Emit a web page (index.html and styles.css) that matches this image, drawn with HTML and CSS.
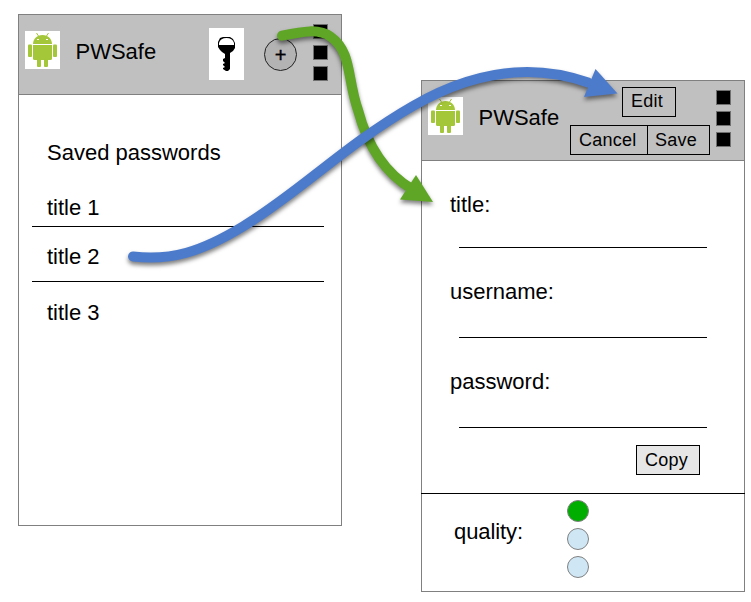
FILE: index.html
```html
<!DOCTYPE html>
<html lang="en">
<head>
<meta charset="utf-8">
<title>PWSafe</title>
<link rel="stylesheet" href="styles.css">
</head>
<body>
<svg width="0" height="0" class="defs">
  <symbol id="robot" viewBox="0 0 35 38">
    <path fill="#fff" d="M0 0h35v38H0z"/>
    <g fill="#a4c639">
      <path d="M8 13C8.300 7.500 12 4 17.500 4S26.700 7.500 27 13z"/>
      <path d="M8 14h19v13.500q0 1.500-1.500 1.500h-16Q8 29 8 27.500z"/>
      <rect x="3" y="13.500" width="4" height="12.500" rx="1"/>
      <rect x="28" y="13.500" width="4" height="12.500" rx="1"/>
      <path d="M12 28h4v7q0 1-1 1h-2q-1 0-1-1zM19 28h4v7q0 1-1 1h-2q-1 0-1-1z"/>
    </g>
    <path d="M11.500 2l2 3M23.500 2l-2 3" stroke="#a4c639" stroke-width="1"/>
    <path d="M12 8.500h2M21 8.500h2" stroke="#fff" stroke-width="1.200"/>
  </symbol>
</svg>
<main class="board">
  <section class="screen list-screen">
    <header class="bar">
      <svg class="robot"><use href="#robot"/></svg>
      <h1>PWSafe</h1>
      <svg class="key" viewBox="0 0 35 52">
        <path fill="#fff" d="M0 0h35v52H0z"/>
        <path fill="#000" d="M14 9h7l3 2 2 4v5l-2 3-3 2v16l-2 2h-2l-3-2v-1l2-1-2-2v-1l2-1-2-2v-2l2-1v-4l-3-2-2-2-2-3v-5l2-4z"/>
        <path fill="#fff" d="M10 17v-2q1.500-5 7.500-5t7.500 5v2z"/>
      </svg>
      <div class="add">+</div>
      <div class="dots"><i></i><i></i><i></i></div>
    </header>
    <h2>Saved passwords</h2>
    <ul class="entries">
      <li>title 1</li>
      <li>title 2</li>
      <li>title 3</li>
    </ul>
  </section>
  <section class="screen edit-screen">
    <header class="bar">
      <svg class="robot"><use href="#robot"/></svg>
      <h1>PWSafe</h1>
      <div class="actions">
        <div class="button edit">Edit</div>
        <div class="pair">
          <div class="button cancel">Cancel</div>
          <div class="button save">Save</div>
        </div>
      </div>
      <div class="dots"><i></i><i></i><i></i></div>
    </header>
    <div class="field first">title:</div>
    <div class="field">username:</div>
    <div class="field">password:</div>
    <div class="button copy">Copy</div>
    <footer class="quality">
      <span>quality:</span>
      <div class="lights"><i class="on"></i><i></i><i></i></div>
    </footer>
  </section>
  <svg class="arrows" viewBox="0 0 751 602">
    <g class="arrow green">
      <path class="line" d="M282 35.700C302 31.500 319 28 331 37C352 52 347 79 358 110C367 144 383 172 412 189"/>
      <path class="head" d="M416 175L433 202L400 199.500Z"/>
    </g>
    <g class="arrow blue">
      <path class="line" d="M133 256.500C171 261 201 252 243 226.500C300 192 345 145 413 106C470 73 530 62 588 82.500"/>
      <path class="head" d="M595.500 69L617.500 93.500L584 97Z"/>
    </g>
  </svg>
</main>
</body>
</html>
```
FILE: styles.css
```css
* { box-sizing: border-box; }
body {
  margin: 0;
  background: #fff;
  color: #000;
  font: 22px/25px "Liberation Sans", Arial, sans-serif;
}
.defs { position: absolute; }
.board {
  position: relative;
  display: flex;
  align-items: flex-start;
  gap: 79px;
  width: 751px;
  height: 602px;
  padding: 14px 0 0 18px;
  overflow: hidden;
}
.screen {
  width: 324px;
  height: 512px;
  flex: none;
  border: 1px solid #808080;
}
.edit-screen { margin-top: 66px; }
.bar {
  display: flex;
  align-items: flex-start;
  height: 80px;
  padding: 0 13px 0 6px;
  background: #c0c0c0;
  border-bottom: 1px solid #808080;
}
.robot { width: 35px; height: 38px; margin-top: 16px; flex: none; }
h1, h2 { margin: 0; font-size: 22px; font-weight: normal; white-space: nowrap; }
h1 { margin: 24px 0 0 15.500px; }
.key { width: 35px; height: 52px; margin: 13px 20px 0 auto; }
.add {
  width: 33px;
  height: 33px;
  margin: 23px 16px 0 0;
  border: 1px solid #222;
  border-radius: 50%;
  background: #b3b3b3;
  font-size: 20px;
  line-height: 32px;
  text-align: center;
  -webkit-text-stroke: 0.4px #000;
}
.dots { display: flex; flex-direction: column; gap: 6px; margin-top: 9px; }
.dots i { width: 15px; height: 15px; background: #000; border: 1px solid #707070; }
h2 { padding: 45px 0 0 28px; }
.entries { list-style: none; margin: 30px 17px 0 13px; padding: 0; }
.entries li { height: 32px; padding-left: 15px; border-bottom: 1px solid #000; }
.entries li:nth-child(2) { height: 55px; padding-top: 17px; }
.entries li:nth-child(3) { height: auto; padding-top: 18px; border: 0; }
.actions {
  display: flex;
  flex-direction: column;
  gap: 8px;
  margin: 6px 6px 0 auto;
}
.button {
  height: 30px;
  border: 1px solid #000;
  font-size: 18px;
  line-height: 27px;
  letter-spacing: 0.25px;
  padding-left: 8px;
}
.edit { width: 54px; margin-left: 52px; }
.pair { display: flex; }
.cancel { width: 78px; line-height: 28px; }
.save { width: 63px; margin-left: -1px; padding-left: 7px; line-height: 28px; }
.field { margin: 31px 37px 0 37px; height: 59px; border-bottom: 1px solid #000; text-indent: -9px; }
.field.first { height: 56px; }
.copy { width: 64px; margin: 17px 0 18px 214px; background: #e6e6e6; line-height: 28px; }
.quality {
  display: flex;
  height: 98px;
  border-top: 1px solid #000;
  margin: 0 -1px;
  padding-left: 33px;
}
.quality span { width: 113px; margin-top: 25px; letter-spacing: -0.1px; }
.lights { display: flex; flex-direction: column; gap: 6px; margin-top: 6px; }
.lights i { width: 22px; height: 22px; border: 1px solid #808080; border-radius: 50%; background: #cfe7f5; }
.lights .on { background: #00ae00; }
.arrows { position: absolute; left: 0; top: 0; width: 751px; height: 602px; }
.arrow { filter: drop-shadow(0 3px 2px rgba(0, 0, 0, 0.5)); }
.line { fill: none; stroke-width: 10px; stroke-linecap: round; }
.green .line { stroke: #5fa526; }
.green .head { fill: #5fa526; }
.blue .line { stroke: #4d7bcb; }
.blue .head { fill: #4d7bcb; }
```
